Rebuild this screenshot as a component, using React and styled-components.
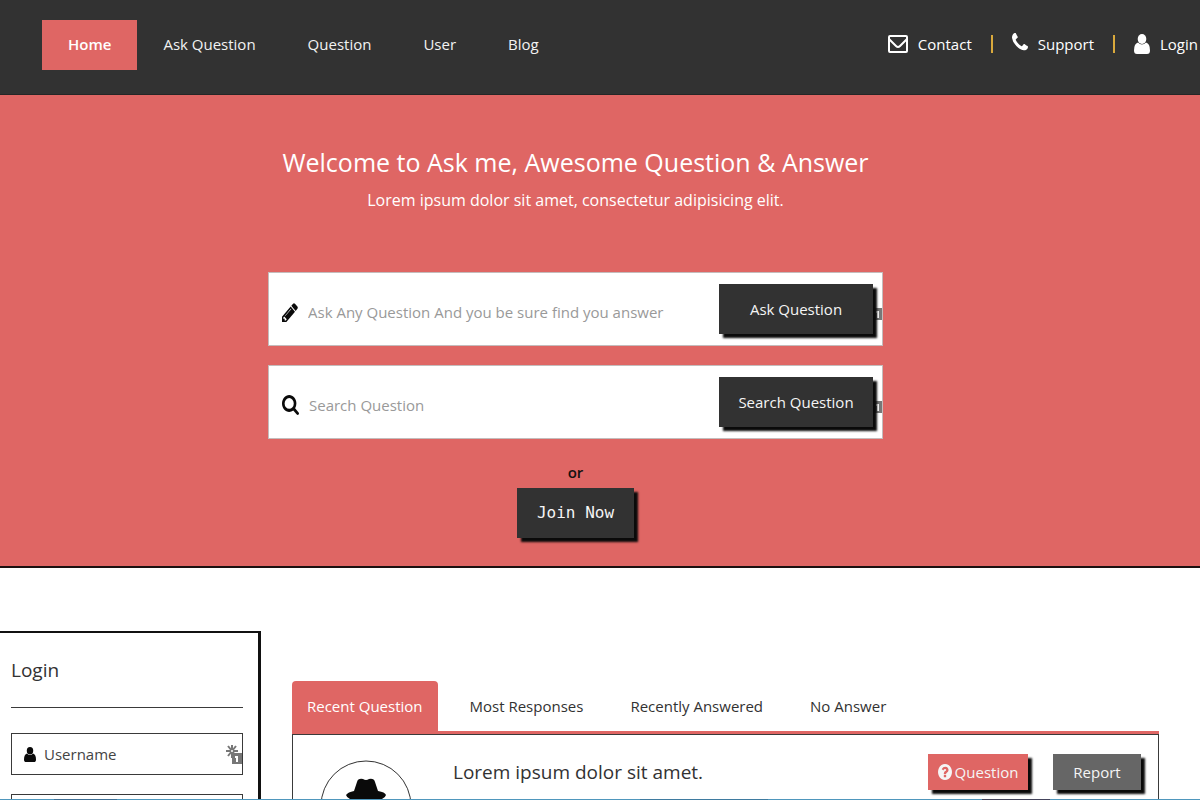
import React, { useState } from 'react';
import styled, { createGlobalStyle, css } from 'styled-components';

const theme = {
  red: '#df6664',
  dark: '#323232',
  grey: '#666666',
  border: '#3a3a3a',
  sans: '"Open Sans", "Noto Sans", sans-serif',
  mono: '"DejaVu Sans Mono", "Liberation Mono", monospace',
};

const GlobalStyle = createGlobalStyle`
  * {
    box-sizing: border-box;
  }

  body {
    margin: 0;
    background: #fff;
    color: ${theme.dark};
    font-family: ${theme.sans};
    font-size: 15px;
    line-height: 20px;
  }

  input, button {
    font: inherit;
  }
`;

const Page = styled.div`
  height: 100vh;
  display: flex;
  flex-direction: column;
`;

const Header = styled.header`
  flex: none;
  display: flex;
  align-items: center;
  justify-content: space-between;
  padding: 20px 2px 24px 42px;
  background: ${theme.dark};
  border-bottom: 1px solid #262626;
`;

const Menu = styled.nav`
  display: flex;
`;

const MenuLink = styled.a`
  padding: 14px 26px 16px;
  color: #f2f2f2;
  text-decoration: none;

  ${props => props.$active && css`
    background: ${theme.red};
    color: #fff;
    font-weight: 600;
  `}
`;

const Contacts = styled.div`
  display: flex;
  align-items: center;
  gap: 19px;
  padding-bottom: 2px;
`;

const ContactLink = styled.a`
  display: flex;
  align-items: center;
  gap: 10px;
  color: #fff;
  text-decoration: none;
`;

const Divider = styled.span`
  width: 2px;
  height: 18px;
  background: #d9a93c;
`;

const Icon = styled.svg`
  flex: none;
  display: block;
  width: ${props => props.$w}px;
  height: ${props => props.$h}px;
  fill: currentColor;
`;

const Hero = styled.section`
  flex: none;
  display: flex;
  flex-direction: column;
  align-items: center;
  padding: 47px 49px 28px 0;
  background: ${theme.red};
  border-bottom: 2px solid #1c1010;
  color: #fff;
`;

const Title = styled.h1`
  margin: 0;
  font-size: 25px;
  font-weight: 400;
  line-height: 40px;
`;

const Lead = styled.p`
  margin: 8px 0 62px;
  font-size: 16px;
`;

const AskForm = styled.form`
  width: 100%;
  max-width: 615px;
  height: 74px;
  margin-bottom: 19px;
  padding: 11px 0 11px 13px;
  display: flex;
  align-items: flex-start;
  background: #fff;
  border: 1px solid #c4bcbc;
  color: #0a0a0a;
`;

const FieldLabel = styled.label`
  display: flex;
  align-items: center;
  align-self: center;
  flex: 1;
  gap: 10px;
  padding-top: 6px;
`;

const TextInput = styled.input`
  flex: 1;
  min-width: 0;
  padding: 0;
  border: 0;
  outline: 0;
  background: transparent;
  color: ${theme.dark};

  &::placeholder {
    color: ${props => props.$dark ? '#444' : '#999'};
    opacity: 1;
  }
`;

const Button = styled.button`
  position: relative;
  height: 50px;
  padding: 0 20px;
  border: 0;
  background: ${theme.dark};
  color: #f5f5f5;
  box-shadow: 4px 4px 2px #0a0a0a;
  cursor: pointer;
`;

const FormButton = styled(Button)`
  width: 154px;
  padding: 0;
`;

const Or = styled.span`
  margin-top: 4px;
  color: #141010;
  font-weight: 600;
`;

const JoinButton = styled(Button)`
  margin-top: 6px;
  font-family: ${theme.mono};
  font-size: 16px;
`;

const Main = styled.main`
  flex: 1;
  min-height: 0;
  overflow: hidden;
  display: flex;
  align-items: flex-start;
  gap: 31px;
  padding: 63px 41px 0 0;
`;

const LoginPanel = styled.aside`
  flex: none;
  width: 261px;
  padding: 22px 15px 40px 11px;
  border: solid #111;
  border-width: 2px 3px 2px 0;
`;

const PanelTitle = styled.h2`
  margin: 0 0 25px;
  padding-bottom: 22px;
  border-bottom: 1px solid ${theme.border};
  font-size: 19px;
  font-weight: 400;
  line-height: 30px;
`;

const LoginField = styled.label`
  display: flex;
  align-items: center;
  gap: 8px;
  height: 42px;
  margin-bottom: 19px;
  padding-left: 12px;
  border: 1px solid ${theme.border};
  color: #0a0a0a;
`;

const Questions = styled.section`
  flex: 1;
  min-width: 0;
  padding-top: 50px;
`;

const Tabs = styled.div`
  display: flex;
  gap: 17px;
  border-bottom: 3px solid ${theme.red};
`;

const Tab = styled.button`
  height: 50px;
  padding: 0 15px;
  border: 0;
  border-radius: 4px 4px 0 0;
  background: ${props => props.$active ? theme.red : 'transparent'};
  color: ${props => props.$active ? '#fff' : theme.dark};
  cursor: pointer;
`;

const QuestionCard = styled.article`
  display: flex;
  align-items: flex-start;
  padding: 19px 17px 60px 27px;
  border: 1px solid ${theme.border};
`;

const Avatar = styled.svg`
  flex: none;
  width: 92px;
  height: 92px;
  margin-top: 6px;
`;

const QuestionTitle = styled.h3`
  flex: 1;
  margin: 3px 0 0 41px;
  font-size: 19px;
  font-weight: 400;
  line-height: 30px;
`;

const CardActions = styled.div`
  display: flex;
  gap: 25px;
`;

const CardButton = styled(Button)`
  display: flex;
  align-items: center;
  justify-content: center;
  gap: 3px;
  height: 36px;
  padding: 0;
  width: ${props => props.$red ? 100 : 88}px;
  background: ${props => props.$red ? theme.red : theme.grey};
`;

const BottomBar = styled.footer`
  flex: none;
  height: 1px;
  background: linear-gradient(
    90deg,
    #4f97bd 54px, #3f6f94 54px 117px,
    #4f97bd 117px 640px, #3f7ba0 640px 768px,
    #4f97bd 768px 982px, #44445c 982px 1050px,
    #4f97bd 1050px
  );
`;

const EnvelopeIcon = () => (
  <Icon $w={20} $h={18} viewBox="0 0 20 18" aria-hidden="true">
    <g fill="none" stroke="currentColor" strokeWidth="2" strokeLinejoin="round">
      <rect x="1" y="1" width="18" height="16" rx="1" />
      <path d="M1 4l7 7q2 2 4 0l7-7" />
    </g>
  </Icon>
);

const PhoneIcon = () => (
  <Icon $w={16} $h={22} viewBox="0 128 1408 1792" preserveAspectRatio="none" aria-hidden="true">
    <path d="M1408 1240q0 27-10 70.5t-21 68.5q-21 50-122 106-94 51-186 51-27 0-53-3.5t-57.5-12.5-47-14.5-55.5-20.5-49-18q-98-35-175-83-127-79-264-216t-216-264q-48-77-83-175-3-9-18-49t-20.5-55.5-14.5-47-12.5-57.5-3.5-53q0-92 51-186 56-101 106-122 25-11 68.5-21t70.5-10q14 0 21 3 18 6 53 76 11 19 30 54t35 63.5 31 53.5q3 4 17.5 25t21.5 35.5 7 28.5q0 20-28.5 50t-62 55-62 53-28.5 46q0 9 5 22.5t8.5 20.5 14 24 11.5 19q76 137 174 235t235 174q2 1 19 11.5t24 14 20.5 8.5 22.5 5q18 0 46-28.5t53-62 55-62 50-28.5q14 0 28.5 7t35.5 21.5 25 17.5q25 15 53.5 31t63.5 35 54 30q70 35 76 53 3 7 3 21z" />
  </Icon>
);

const UserIcon = ({ w, h }) => (
  <Icon $w={w} $h={h} viewBox="0 0 16 20" preserveAspectRatio="none" aria-hidden="true">
    <ellipse cx="8" cy="5" rx="4.3" ry="5" />
    <path d="M4 8.5q4 4 8 0 4 1 4 8 0 3.500-3 3.500H3q-3 0-3-3.500 0-7 4-8z" />
  </Icon>
);

const PencilIcon = () => (
  <Icon $w={16} $h={19} viewBox="128 128 1536 1536" preserveAspectRatio="none" aria-hidden="true">
    <path d="M491 1536l91-91-235-235-91 91v107h128v128h107zm523-928q0-22-22-22-10 0-17 7l-542 542q-7 7-7 17 0 22 22 22 10 0 17-7l542-542q7-7 7-17zm-54-192l416 416-832 832h-416v-416zm683 96q0 53-37 90l-166 166-416-416 166-165q36-38 90-38 53 0 91 38l235 234q37 39 37 91z" />
  </Icon>
);

const SearchIcon = () => (
  <Icon $w={17} $h={20} viewBox="0 128 1664 1664" preserveAspectRatio="none" aria-hidden="true">
    <path d="M1152 832q0-185-131.5-316.5t-316.5-131.5-316.5 131.5-131.5 316.5 131.5 316.5 316.5 131.5 316.5-131.5 131.5-316.5zm512 832q0 52-38 90t-90 38q-54 0-90-38l-343-342q-179 124-399 124-143 0-273.5-55.5t-225-150-150-225-55.5-273.5 55.5-273.5 150-225 225-150 273.5-55.5 273.5 55.5 225 150 150 225 55.5 273.5q0 220-124 399l343 343q37 37 37 90z" />
  </Icon>
);

const HelpIcon = () => (
  <Icon $w={14} $h={16} viewBox="0 128 1536 1536" preserveAspectRatio="none" aria-hidden="true">
    <path d="M896 1376v-192q0-14-9-23t-23-9h-192q-14 0-23 9t-9 23v192q0 14 9 23t23 9h192q14 0 23-9t9-23zm256-672q0-88-55.5-163t-138.5-116-170-41q-243 0-371 213-15 24 8 42l132 100q7 6 19 6 16 0 25-12 53-68 86-92 34-24 86-24 48 0 85.5 26t37.5 59q0 38-20 61t-68 45q-63 28-115.5 86.5t-52.5 125.5v36q0 14 9 23t23 9h192q14 0 23-9t9-23q0-19 21.5-49.5t54.5-49.5q32-18 49-28.5t46-35 44.5-48 28-60.5 12.5-81zm384 192q0 209-103 385.5t-279.5 279.5-385.5 103-385.5-103-279.5-279.5-103-385.5 103-385.5 279.5-279.5 385.5-103 385.5 103 279.5 279.5 103 385.5z" />
  </Icon>
);

// password manager mark: an asterisk with a small numbered square
const KeyIcon = () => (
  <Icon $w={16} $h={20} viewBox="0 0 16 20" aria-hidden="true">
    <path d="M6 1v13M0 7h12M2 2l8 10M10 2l-8 10" fill="none" stroke="#777" strokeWidth="2" />
    <circle cx="6" cy="7" r="1" fill="#fff" />
    <rect x="6" y="9" width="10" height="11" fill="#777" />
    <path d="M9 12h3v6h-2v-4H9z" fill="#fff" />
  </Icon>
);

const KeyEdge = () => (
  <Icon $w={9} $h={14} viewBox="0 0 9 14" aria-hidden="true">
    <rect y="1" width="9" height="12" fill="#777" />
    <path d="M3 4h3v7H4V6H3z" fill="#fff" />
  </Icon>
);

const EdgeSlot = styled.span`
  align-self: center;
  padding-top: 9px;
`;

const menu = ['Home', 'Ask Question', 'Question', 'User', 'Blog'];
const tabs = ['Recent Question', 'Most Responses', 'Recently Answered', 'No Answer'];

const App = () => {
  const [page, setPage] = useState('Home');
  const [tab, setTab] = useState('Recent Question');

  const stop = e => e.preventDefault();

  return (
    <>
      <GlobalStyle />
      <Page>
        <Header>
          <Menu>
            {menu.map(item => (
              <MenuLink key={item} href="#" $active={item === page} onClick={() => setPage(item)}>
                {item}
              </MenuLink>
            ))}
          </Menu>
          <Contacts>
            <ContactLink href="#"><EnvelopeIcon />Contact</ContactLink>
            <Divider />
            <ContactLink href="#"><PhoneIcon />Support</ContactLink>
            <Divider />
            <ContactLink href="#"><UserIcon w={16} h={20} />Login</ContactLink>
          </Contacts>
        </Header>

        <Hero>
          <Title>Welcome to Ask me, Awesome Question &amp; Answer</Title>
          <Lead>Lorem ipsum dolor sit amet, consectetur adipisicing elit.</Lead>
          <AskForm onSubmit={stop}>
            <FieldLabel>
              <PencilIcon />
              <TextInput aria-label="Ask" placeholder="Ask Any Question And you be sure find you answer" />
            </FieldLabel>
            <FormButton>Ask Question</FormButton>
            <EdgeSlot><KeyEdge /></EdgeSlot>
          </AskForm>
          <AskForm onSubmit={stop}>
            <FieldLabel>
              <SearchIcon />
              <TextInput aria-label="Search" placeholder="Search Question" />
            </FieldLabel>
            <FormButton>Search Question</FormButton>
            <EdgeSlot><KeyEdge /></EdgeSlot>
          </AskForm>
          <Or>or</Or>
          <JoinButton>Join Now</JoinButton>
        </Hero>

        <Main>
          <LoginPanel>
            <PanelTitle>Login</PanelTitle>
            <LoginField>
              <UserIcon w={12} h={15} />
              <TextInput $dark aria-label="Username" placeholder="Username" />
              <KeyIcon />
            </LoginField>
            <LoginField>
              <TextInput $dark type="password" aria-label="Password" />
            </LoginField>
          </LoginPanel>

          <Questions>
            <Tabs role="tablist">
              {tabs.map(item => (
                <Tab
                  key={item}
                  role="tab"
                  aria-selected={item === tab}
                  $active={item === tab}
                  onClick={() => setTab(item)}
                >
                  {item}
                </Tab>
              ))}
            </Tabs>
            <QuestionCard>
              <Avatar viewBox="0 0 92 92" aria-hidden="true">
                <circle cx="46" cy="46" r="45" fill="#fff" stroke="#333" />
                <path d="M26 35q2-3 8-4l3-9q1-4 6-3 3 2 6 0 5-1 6 3l3 9q7 1 8 4-1 4-8 5-12 2-24 0-7-1-8-5z" fill="#0a0a0a" />
              </Avatar>
              <QuestionTitle>Lorem ipsum dolor sit amet.</QuestionTitle>
              <CardActions>
                <CardButton $red><HelpIcon />Question</CardButton>
                <CardButton>Report</CardButton>
              </CardActions>
            </QuestionCard>
          </Questions>
        </Main>
        <BottomBar />
      </Page>
    </>
  );
};

export default App;
